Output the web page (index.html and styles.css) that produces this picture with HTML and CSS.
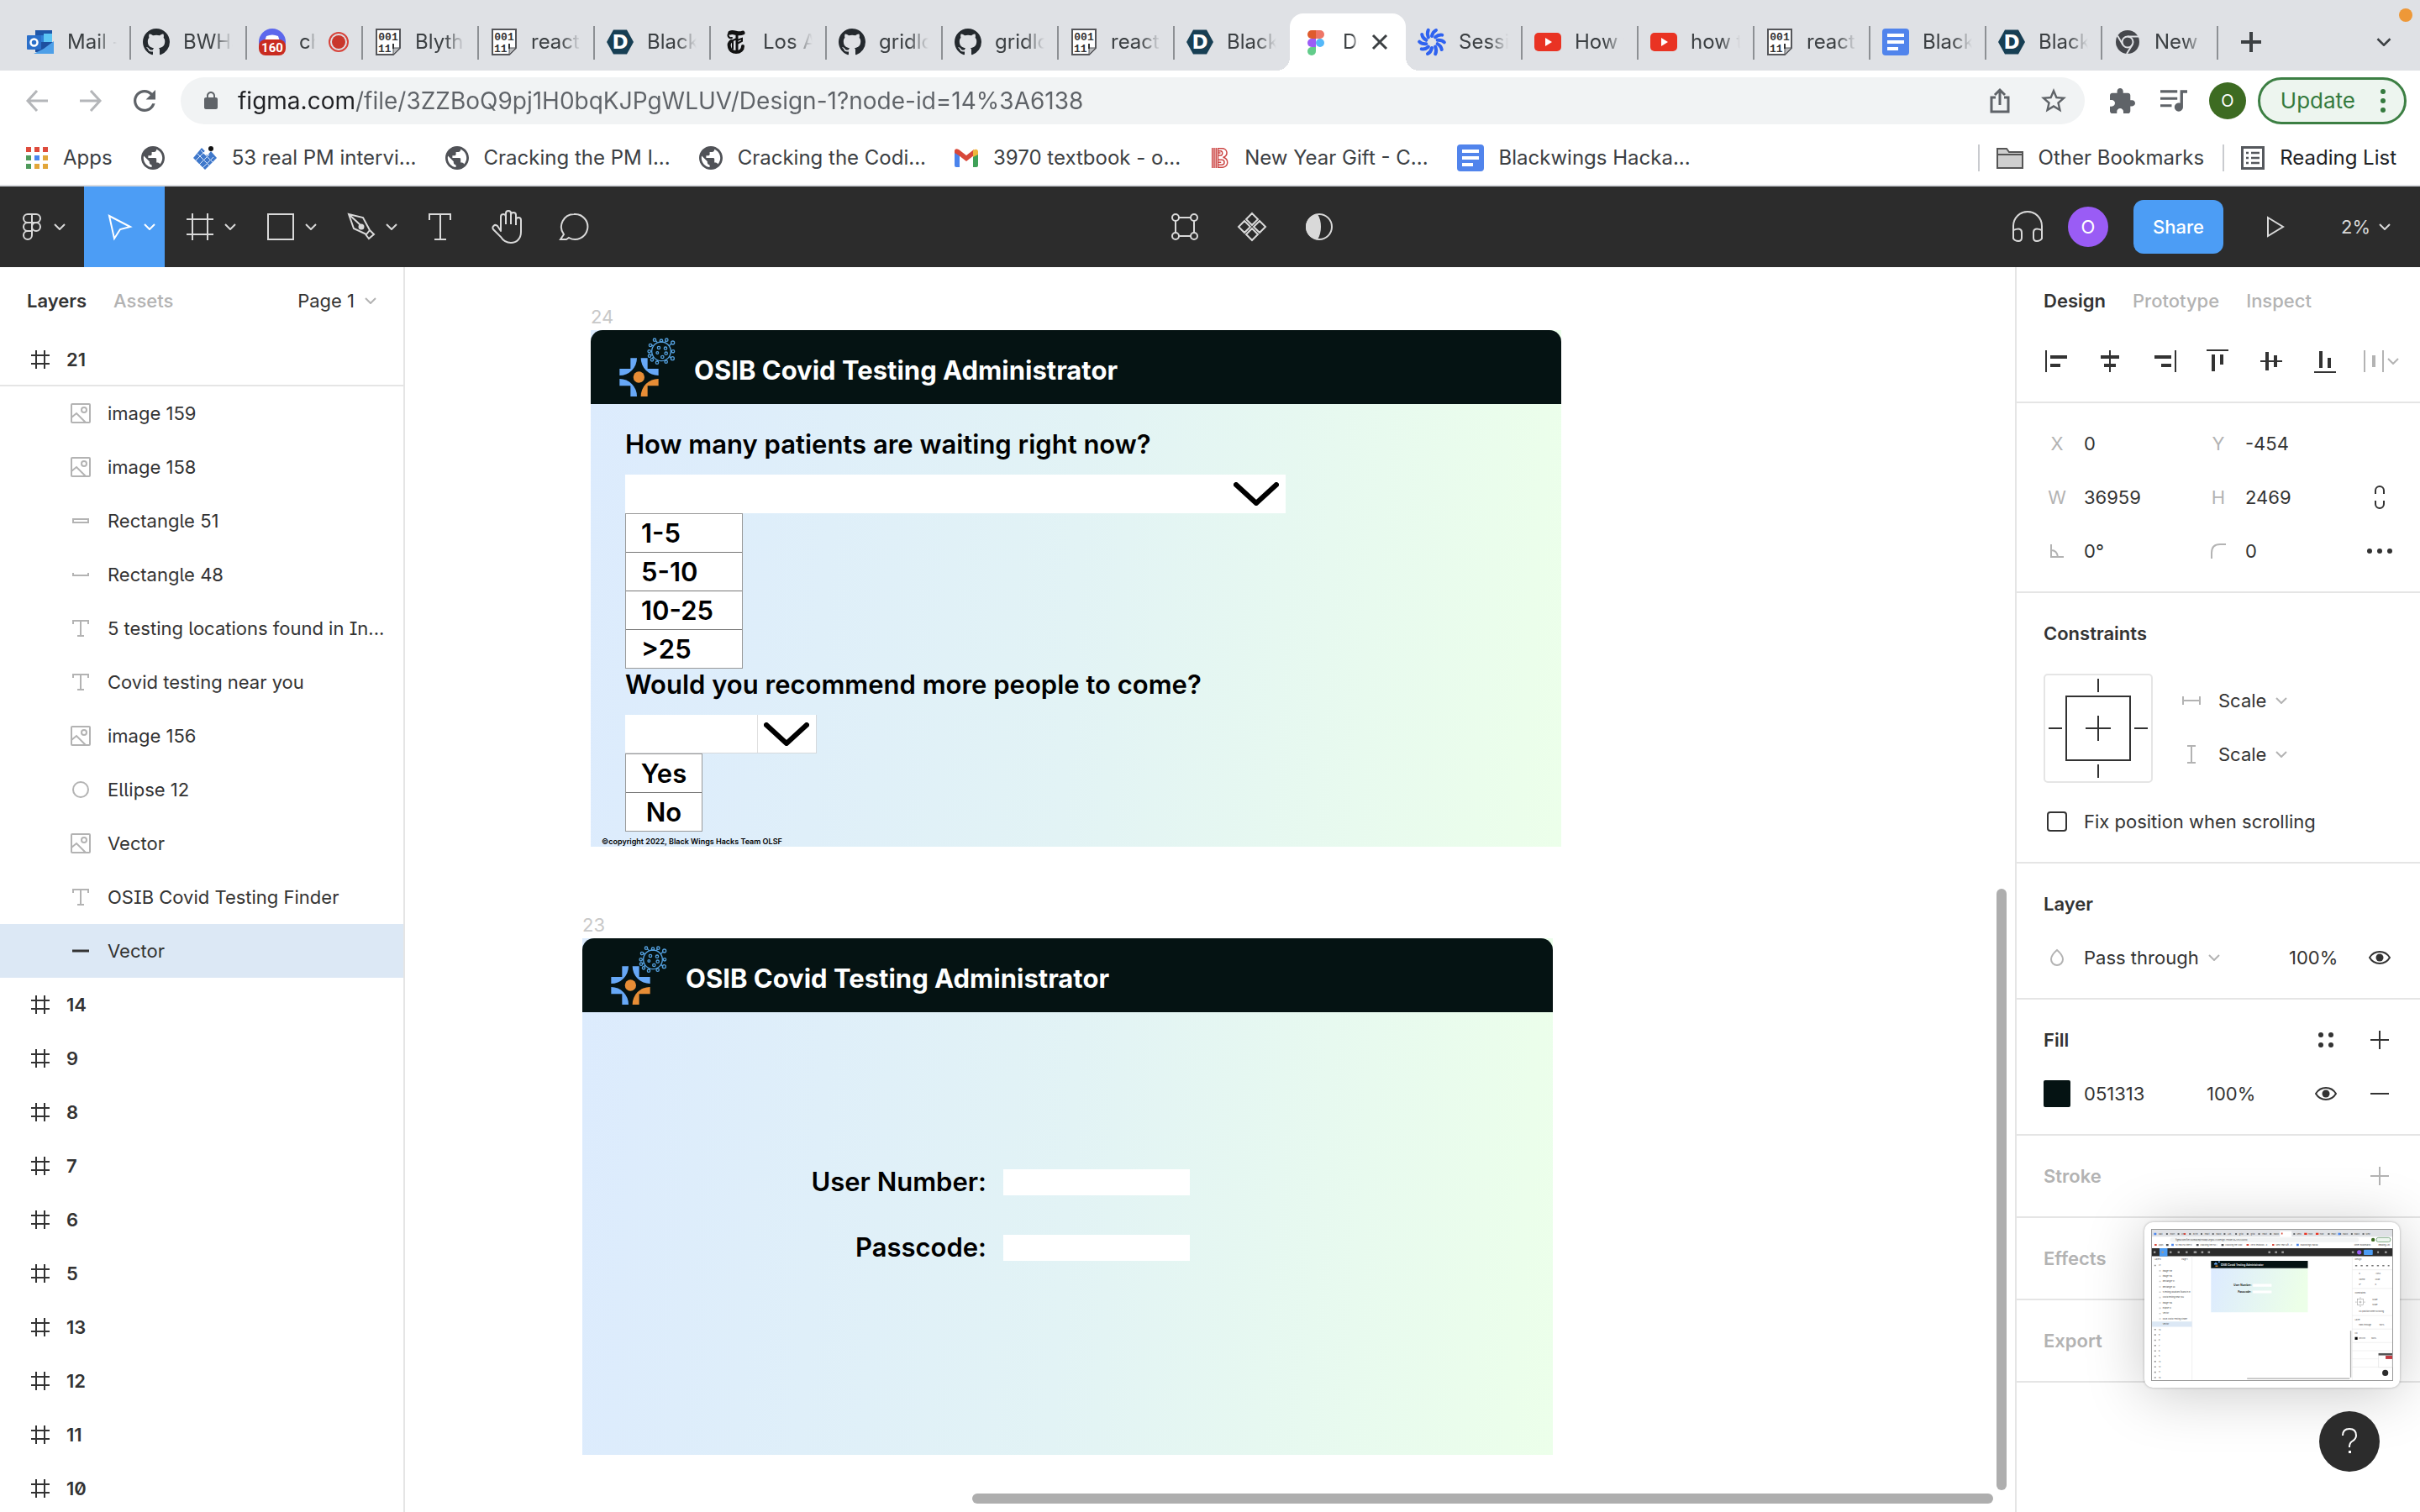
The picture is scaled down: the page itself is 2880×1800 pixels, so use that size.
FILE: index.html
```html
<!DOCTYPE html>
<html lang="en">
<head>
<meta charset="utf-8">
<title>Design 1 – Figma</title>
<link rel="stylesheet" href="styles.css">
</head>
<body>
<svg class="sprite" aria-hidden="true">
  <symbol id="github" viewBox="0 0 16 16"><path fill="#24292e" d="M8 0C3.58 0 0 3.58 0 8c0 3.54 2.29 6.53 5.47 7.59.4.07.55-.17.55-.38 0-.19-.01-.82-.01-1.49-2.01.37-2.53-.49-2.69-.94-.09-.23-.48-.94-.82-1.13-.28-.15-.68-.52-.01-.53.63-.01 1.08.58 1.23.82.72 1.21 1.87.87 2.33.66.07-.52.28-.87.51-1.07-1.78-.2-3.64-.89-3.64-3.95 0-.87.31-1.59.82-2.15-.08-.2-.36-1.02.08-2.12 0 0 .67-.21 2.2.82a7.6 7.6 0 0 1 4 0c1.53-1.04 2.2-.82 2.2-.82.44 1.1.16 1.92.08 2.12.51.56.82 1.27.82 2.15 0 3.07-1.87 3.75-3.65 3.95.29.25.54.73.54 1.48 0 1.07-.01 1.93-.01 2.2 0 .21.15.46.55.38A8 8 0 0 0 16 8c0-4.42-3.58-8-8-8z"/></symbol>
  <symbol id="binary" viewBox="0 0 32 32"><path fill="#fff" stroke="#55565a" stroke-width="2" d="M2 1h28v22l-8 8H2z"/><path fill="#b9babd" stroke="#55565a" stroke-width="1" d="M30 23h-8v8z"/><text x="16" y="14" text-anchor="middle" class="bits">001</text><text x="4" y="28" class="bits">11</text><path stroke="#333" stroke-width="2" d="M22 18v6"/></symbol>
  <symbol id="devpost" viewBox="0 0 32 32"><path fill="#173f54" d="M8 1.500h16l8 14.500-8 14.500H8L0 16z"/><text x="16" y="24" text-anchor="middle" class="logo-d">D</text></symbol>
  <symbol id="youtube" viewBox="0 0 32 32"><rect y="5" width="32" height="22" rx="5" fill="#e93323"/><path fill="#fff" d="M13 11l8 5-8 5z"/></symbol>
  <symbol id="docs" viewBox="0 0 32 32"><rect width="32" height="32" rx="4" fill="#5184ec"/><path stroke="#fff" stroke-width="4" d="M6 8h20M6 16h20M6 24h13"/></symbol>
  <symbol id="globe" viewBox="2 2 20 20"><path fill="#505257" d="M12 2C6.480 2 2 6.480 2 12s4.480 10 10 10 10-4.480 10-10S17.520 2 12 2zm-1 17.930c-3.950-.49-7-3.850-7-7.930 0-.62.08-1.210.21-1.790L9 15v1c0 1.100.9 2 2 2v1.930zm6.900-2.540c-.26-.81-1-1.390-1.900-1.390h-1v-3c0-.55-.45-1-1-1H8v-2h2c.55 0 1-.45 1-1V7h2c1.100 0 2-.9 2-2v-.41c2.930 1.190 5 4.060 5 7.410 0 2.080-.8 3.970-2.100 5.390z"/></symbol>
  <symbol id="chev" viewBox="0 0 14 8"><path fill="none" stroke="currentColor" stroke-width="2" d="M1 1l6 6 6-6"/></symbol>
  <symbol id="bigchev" viewBox="0 0 54 28"><path fill="none" stroke="#000" stroke-width="6" stroke-linecap="round" stroke-linejoin="round" d="M3 3l24 22L51 3"/></symbol>
  <symbol id="frame" viewBox="0 0 22 22"><path stroke="#333" stroke-width="2" d="M6 0v22M16 0v22M0 6h22M0 16h22"/></symbol>
  <symbol id="image" viewBox="0 0 24 24"><g fill="none" stroke="#b3b3b3" stroke-width="2"><rect x="1" y="1" width="22" height="22" rx="1"/><circle cx="16" cy="8" r="3"/><path d="M1 17l6-5 11 11"/></g></symbol>
  <symbol id="text" viewBox="0 0 24 24"><path fill="none" stroke="#b3b3b3" stroke-width="2" d="M3 7V3h18v4M12 3v18M8 21h8"/></symbol>
  <symbol id="eye" viewBox="0 0 26 18"><path fill="none" stroke="#333" stroke-width="2" d="M1 9C4 4 8 2 13 2s9 2 12 7c-3 5-7 7-12 7S4 14 1 9z"/><circle cx="13" cy="9" r="4.500" fill="#333"/></symbol>
  <symbol id="plus" viewBox="0 0 22 22"><path stroke="currentColor" stroke-width="2" d="M11 0v22M0 11h22"/></symbol>
  <symbol id="logo" viewBox="0 0 270 252">
    <g fill="#67a8f7"><path d="M67 94H90A62 62 0 0 1 28 156V132H67z"/><path d="M128 94H104A62 62 0 0 0 167 156V132H128z"/><path d="M28 168V193H67V231H90A62 62 0 0 0 28 168z"/></g>
    <g fill="#e78d36"><path d="M167 168V193H128V231H104A62 62 0 0 1 167 168z"/><circle cx="97" cy="162" r="20"/></g>
    <g fill="none" stroke="#549fdd" stroke-width="4"><circle cx="177" cy="70" r="34"/>
    <path d="M177 36v-3M190 38l4-6M163 38l-6-7M205 50l8-8M149 50l-6-2M211 70h4M143 70h-4M149 90l-5 6M144 82l-6 3M165 102l-2 4M190 102l3 3M205 88l9 6"/>
    <circle cx="177" cy="32" r="5"/><circle cx="196" cy="29" r="5"/><circle cx="153" cy="29" r="5"/><circle cx="218" cy="39" r="6"/><circle cx="138" cy="48" r="5"/><circle cx="219" cy="70" r="5"/><circle cx="134" cy="70" r="5"/><circle cx="135" cy="86" r="5"/><circle cx="144" cy="100" r="5"/><circle cx="162" cy="110" r="5"/><circle cx="194" cy="107" r="5"/><circle cx="217" cy="95" r="6"/>
    <circle cx="168" cy="57" r="5"/><circle cx="192" cy="59" r="5"/><circle cx="163" cy="75" r="4"/><circle cx="194" cy="77" r="5"/><circle cx="181" cy="90" r="5"/></g>
  </symbol>
</svg>

<header class="browser">
  <div class="tabstrip">
    <div class="tabs" role="tablist">
      <button class="tab" role="tab"><svg class="i32" viewBox="0 0 32 32"><path fill="#1f56a8" d="M10 2h20v6H10z"/><path fill="#2f7fd6" d="M10 8h10v8H10z"/><path fill="#5cc5f5" d="M20 6h10v12H20z"/><path fill="#1d4f9f" d="M10 16h22L22 28H10z"/><path fill="#4d9fe8" d="M8 30h24V15L20 24z"/><rect y="8" width="17" height="17" rx="1" fill="#2b6fc9"/><circle cx="8.500" cy="16.500" r="4" fill="none" stroke="#fff" stroke-width="2.500"/></svg><span class="tab-name">Mail -</span></button>
      <button class="tab" role="tab"><svg class="i32"><use href="#github"/></svg><span class="tab-name">BWHa</span></button>
      <button class="tab" role="tab"><svg class="i32" viewBox="0 0 32 32"><circle cx="16" cy="16" r="16" fill="#5c67ec"/><path fill="#fff" d="M9 9q7-3 14 0l2 6H7z"/><rect y="13" width="32" height="19" rx="8" fill="#c92b20"/><text x="16" y="28" text-anchor="middle" class="badge">160</text></svg><span class="tab-name">ch</span><svg class="i24" viewBox="0 0 24 24"><circle cx="12" cy="12" r="11" fill="none" stroke="#d8433a" stroke-width="2"/><circle cx="12" cy="12" r="8" fill="#c9372c"/></svg></button>
      <button class="tab" role="tab"><svg class="i32"><use href="#binary"/></svg><span class="tab-name">Blyth</span></button>
      <button class="tab" role="tab"><svg class="i32"><use href="#binary"/></svg><span class="tab-name">react</span></button>
      <button class="tab" role="tab"><svg class="i32"><use href="#devpost"/></svg><span class="tab-name">Black</span></button>
      <button class="tab" role="tab"><svg class="i32" viewBox="0 0 32 32"><g fill="none" stroke="#121212" stroke-linecap="round"><path stroke-width="5" d="M9 5c5-2 9 3 15 0"/><path stroke-width="2" d="M8 5c-3 3-1 7 3 6"/><path stroke-width="4" d="M10 15c-4 3-3 13 6 13 5 0 8-3 8-7"/><path stroke-width="3" d="M17 8v18"/><path stroke-width="2" d="M10 15l7-3M17 14l6-2v3l-6 3M12 14v10"/></g></svg><span class="tab-name">Los A</span></button>
      <button class="tab" role="tab"><svg class="i32"><use href="#github"/></svg><span class="tab-name">gridlo</span></button>
      <button class="tab" role="tab"><svg class="i32"><use href="#github"/></svg><span class="tab-name">gridlo</span></button>
      <button class="tab" role="tab"><svg class="i32"><use href="#binary"/></svg><span class="tab-name">react</span></button>
      <button class="tab no-line" role="tab"><svg class="i32"><use href="#devpost"/></svg><span class="tab-name">Black</span></button>
      <button class="tab no-line active" role="tab" aria-selected="true"><svg class="i32" viewBox="0 0 32 32"><path fill="#df5b2d" d="M16 2h-5a5 5 0 0 0 0 10h5z"/><path fill="#ee7667" d="M16 2h5a5 5 0 0 1 0 10h-5z"/><path fill="#9b5cf6" d="M16 12h-5a5 5 0 0 0 0 10h5z"/><circle cx="21" cy="17" r="5" fill="#54b8f9"/><path fill="#62cc8a" d="M11 22h5v5a5 5 0 1 1-5-5z"/></svg><span class="tab-name">De</span><svg class="i18" viewBox="0 0 18 18"><path stroke="#3c4043" stroke-width="3" d="M1 1l16 16M17 1L1 17"/></svg></button>
      <button class="tab" role="tab"><svg class="i32" viewBox="-16 -16 32 32"><g fill="none" stroke="#2f62f0" stroke-width="4" stroke-linecap="round"><path id="petal" d="M0-7q1-5 5-7"/><use href="#petal" transform="rotate(36)"/><use href="#petal" transform="rotate(72)"/><use href="#petal" transform="rotate(108)"/><use href="#petal" transform="rotate(144)"/><use href="#petal" transform="rotate(180)"/><use href="#petal" transform="rotate(216)"/><use href="#petal" transform="rotate(252)"/><use href="#petal" transform="rotate(288)"/><use href="#petal" transform="rotate(324)"/></g></svg><span class="tab-name">Sessi</span></button>
      <button class="tab" role="tab"><svg class="i32"><use href="#youtube"/></svg><span class="tab-name">How t</span></button>
      <button class="tab" role="tab"><svg class="i32"><use href="#youtube"/></svg><span class="tab-name">how t</span></button>
      <button class="tab" role="tab"><svg class="i32"><use href="#binary"/></svg><span class="tab-name">react</span></button>
      <button class="tab" role="tab"><svg class="i32"><use href="#docs"/></svg><span class="tab-name">Black</span></button>
      <button class="tab" role="tab"><svg class="i32"><use href="#devpost"/></svg><span class="tab-name">Black</span></button>
      <button class="tab" role="tab"><svg class="i32" viewBox="0 0 32 32"><circle cx="16" cy="16" r="14" fill="#45474c"/><circle cx="16" cy="16" r="6.500" fill="#45474c" stroke="#dfe1e5" stroke-width="2"/><path stroke="#dfe1e5" stroke-width="2" d="M16 9.500h13M10.400 19.200L4 8.500M21.600 19.200L15 30"/></svg><span class="tab-name">New</span></button>
    </div>
    <button class="new-tab" aria-label="New tab"><svg class="i24" viewBox="0 0 24 24"><path stroke="#3c4043" stroke-width="4" d="M12 0v24M0 12h24"/></svg></button>
    <button class="tab-search" aria-label="Search tabs"><svg class="chev18"><use href="#chev"/></svg></button>
    <span class="mic-dot"></span>
  </div>
  <div class="navbar">
    <button aria-label="Back"><svg class="i26" viewBox="0 0 26 26"><path fill="none" stroke="#b4b6b9" stroke-width="3" d="M26 13H2M13 1L2 13l11 12"/></svg></button>
    <button aria-label="Forward"><svg class="i26" viewBox="0 0 26 26"><path fill="none" stroke="#b4b6b9" stroke-width="3" d="M0 13h24M13 1l11 12-11 12"/></svg></button>
    <button aria-label="Reload"><svg class="i26" viewBox="4 4 16 16"><path fill="#5f6368" d="M17.650 6.350C16.200 4.900 14.210 4 12 4c-4.420 0-7.990 3.580-7.990 8s3.570 8 7.990 8c3.730 0 6.840-2.550 7.730-6h-2.080c-.82 2.330-3.040 4-5.650 4-3.310 0-6-2.690-6-6s2.690-6 6-6c1.660 0 3.140.69 4.220 1.780L13 11h7V4l-2.350 2.350z"/></svg></button>
    <div class="omnibox">
      <svg class="i24" viewBox="0 0 24 24"><path fill="#5f6368" d="M18 8h-1V6c0-2.760-2.240-5-5-5S7 3.240 7 6v2H6c-1.100 0-2 .9-2 2v10c0 1.100.9 2 2 2h12c1.100 0 2-.9 2-2V10c0-1.100-.9-2-2-2zM15.100 8H8.900V6c0-1.710 1.390-3.100 3.100-3.100s3.100 1.390 3.100 3.100v2z"/></svg>
      <input class="url" type="text" aria-label="Address" value="figma.com/file/3ZZBoQ9pj1H0bqKJPgWLUV/Design-1?node-id=14%3A6138">
      <button aria-label="Share page"><svg class="i30" viewBox="0 0 30 30"><path fill="none" stroke="#5f6368" stroke-width="3" d="M10 11H5v17h20V11h-5M15 20V3M9 8l6-6 6 6"/></svg></button>
      <button aria-label="Bookmark"><svg class="i30" viewBox="2 2 20 20"><path fill="#5f6368" d="M22 9.240l-7.190-.62L12 2 9.190 8.630 2 9.240l5.460 4.730L5.820 21 12 17.270 18.180 21l-1.630-7.030L22 9.240zM12 15.400l-3.760 2.270 1-4.280-3.320-2.880 4.380-.38L12 6.100l1.710 4.040 4.380.38-3.320 2.880 1 4.280L12 15.400z"/></svg></button>
    </div>
    <button class="ext" aria-label="Extensions"><svg class="i30" viewBox="2 1 21 21"><path fill="#5f6368" d="M20.500 11H19V7c0-1.100-.9-2-2-2h-4V3.500C13 2.120 11.880 1 10.500 1S8 2.120 8 3.500V5H4c-1.100 0-1.990.9-1.990 2v3.800H3.500c1.490 0 2.700 1.210 2.700 2.700s-1.210 2.700-2.700 2.700H2V20c0 1.100.9 2 2 2h3.800v-1.500c0-1.490 1.210-2.700 2.700-2.700 1.490 0 2.700 1.210 2.700 2.700V22H17c1.100 0 2-.9 2-2v-4h1.500c1.380 0 2.500-1.120 2.500-2.500S21.880 11 20.500 11z"/></svg></button>
    <button class="queue" aria-label="Media"><svg class="i32" viewBox="3 3 19 19"><path fill="#5f6368" d="M15 5H3v1.800h12V5zm0 5H3v1.800h12V10zM3 16.800h8V15H3v1.800zM17 5v9.180c-.31-.11-.65-.18-1-.18-1.660 0-3 1.340-3 3s1.340 3 3 3 3-1.340 3-3V7h3V5h-5z"/></svg></button>
    <button class="profile" aria-label="Profile">O</button>
    <button class="update">Update<svg class="dots3" viewBox="0 0 6 28"><circle cx="3" cy="3" r="3"/><circle cx="3" cy="14" r="3"/><circle cx="3" cy="25" r="3"/></svg></button>
  </div>
  <nav class="bookmarks">
    <a href="#"><svg class="i26" viewBox="0 0 26 26"><path fill="#de4b3c" d="M0 0h6v6H0zM10 0h6v6h-6zM20 0h6v6h-6z"/><path fill="#4f9a5b" d="M0 10h6v6H0zM0 20h6v6H0z"/><path fill="#4a86ee" d="M10 10h6v6h-6z"/><path fill="#e2a63a" d="M20 10h6v6h-6zM10 20h6v6h-6zM20 20h6v6h-6z"/></svg>Apps</a>
    <a href="#" aria-label="Site"><svg class="i28"><use href="#globe"/></svg></a>
    <a href="#"><svg class="i28" viewBox="0 0 28 28"><path fill="#3f78cb" d="M10 2l4 4-2 3 5 2 4-5 7 8-14 14L0 14z"/><path stroke="#dce8fa" stroke-width="1" d="M5 9l14 14M9 5l14 14M14 6L3 17M19 10L7 22M24 13L11 26"/><circle cx="21" cy="3" r="3" fill="#111"/></svg>53 real PM intervi...</a>
    <a href="#"><svg class="i28"><use href="#globe"/></svg>Cracking the PM I...</a>
    <a href="#"><svg class="i28"><use href="#globe"/></svg>Cracking the Codi...</a>
    <a href="#"><svg class="i28" viewBox="0 0 28 28"><path fill="#4a83ec" d="M0 6l6 4v15H2q-2 0-2-2z"/><path fill="#3fa158" d="M28 6l-6 4v15h4q2 0 2-2z"/><path fill="#d8483a" d="M0 5q1-3 5-1l9 7 9-7v7l-9 7-9-7-5-3z"/><path fill="#eeb63c" d="M22 5q5-3 6 1v4l-6 3z"/></svg>3970 textbook - o...</a>
    <a href="#"><svg class="i24" viewBox="0 0 24 32"><g fill="none" stroke="#cc4644" stroke-width="2"><path d="M1 0v32M4 0v32M7 0v32M10 1h6a7 7 0 0 1 2 14 8 8 0 0 1-2 16h-6zM10 5h5a4 4 0 0 1 0 7h-5M10 19h6a4 4 0 0 1 0 8h-6M10 8h4M10 23h5"/></g></svg>New Year Gift - C...</a>
    <a href="#"><svg class="i32"><use href="#docs"/></svg>Blackwings Hacka...</a>
    <span class="spacer"></span>
    <a href="#" class="ruled"><svg class="i32" viewBox="0 0 32 32"><path fill="#cfcfcf" stroke="#555" stroke-width="2" d="M1 5h11l3 4h16v19H1z"/><path stroke="#555" stroke-width="2" d="M1 12h30"/></svg>Other Bookmarks</a>
    <a href="#" class="ruled strong"><svg class="i28" viewBox="0 0 28 28"><rect x="1.500" y="1.500" width="25" height="25" fill="none" stroke="#55585d" stroke-width="3"/><path stroke="#55585d" stroke-width="2.500" d="M6 8h3M6 14h3M6 20h3M12 8h10M12 14h10M12 20h10"/></svg>Reading List</a>
  </nav>
</header>

<div class="toolbar">
  <div class="tools">
    <button class="tool menu" aria-label="Main menu"><svg class="i32" viewBox="0 0 32 32"><g fill="none" stroke="#d9d9d9" stroke-width="2"><path d="M16 1h-5a5 5 0 0 0 0 10h5zM16 1h5a5 5 0 0 1 0 10h-5zM16 11h-5a5 5 0 0 0 0 10h5zM11 21h5v5a5 5 0 1 1-5-5z"/><circle cx="21" cy="16" r="5"/></g></svg><svg class="chev14"><use href="#chev"/></svg></button>
    <button class="tool on" aria-label="Move"><svg class="i32" viewBox="0 0 32 32"><path fill="none" stroke="#fff" stroke-width="2" d="M4 3l25 13-12 3-7 11z"/></svg><svg class="chev14"><use href="#chev"/></svg></button>
    <button class="tool" aria-label="Frame"><svg class="i32" viewBox="0 0 32 32"><path stroke="#d9d9d9" stroke-width="2" d="M7 0v32M25 0v32M0 7h32M0 25h32"/></svg><svg class="chev14"><use href="#chev"/></svg></button>
    <button class="tool" aria-label="Rectangle"><svg class="i32" viewBox="0 0 32 32"><rect x="1" y="1" width="30" height="30" fill="none" stroke="#d9d9d9" stroke-width="2"/></svg><svg class="chev14"><use href="#chev"/></svg></button>
    <button class="tool" aria-label="Pen"><svg class="i32" viewBox="0 0 32 32"><g fill="none" stroke="#d9d9d9" stroke-width="2"><path d="M1 1l17 4 8 15-4 5-15-7zM26 20l5 5-6 5-4-5M1 1l14 13"/><circle cx="16" cy="16" r="2.500" fill="#d9d9d9"/></g></svg><svg class="chev14"><use href="#chev"/></svg></button>
    <button class="tool small" aria-label="Text"><svg class="i32" viewBox="0 0 32 32"><path fill="none" stroke="#d9d9d9" stroke-width="2" d="M3 8V1h25v7M16 1v30M9 31h14"/></svg></button>
    <button class="tool small" aria-label="Hand"><svg class="i40" viewBox="0 0 40 40"><path fill="none" stroke="#d9d9d9" stroke-width="2" stroke-linecap="round" d="M12 25V8a3 3 0 0 1 6 0v9V4a3 3 0 0 1 6 0v13V6a3 3 0 0 1 6 0v12-6a3 3 0 0 1 6 0v14c0 8-5 13-12 13-6 0-9-2-12-7L3 23c-2-3 2-7 5-4l4 6"/></svg></button>
    <button class="tool small" aria-label="Comment"><svg class="i34" viewBox="0 0 34 32"><path fill="none" stroke="#d9d9d9" stroke-width="2" d="M16 1a15 15 0 1 1-6 28l-3 2H0l4-6A15 15 0 0 1 16 1z"/></svg></button>
  </div>
  <div class="tools center">
    <button class="tool small" aria-label="Edit object"><svg class="i32" viewBox="0 0 32 32"><g fill="none" stroke="#d9d9d9" stroke-width="2"><circle cx="5" cy="5" r="4"/><circle cx="27" cy="5" r="4"/><circle cx="5" cy="27" r="4"/><circle cx="27" cy="27" r="4"/><path d="M9 5h14M9 27h14M5 9v14M27 9v14"/></g></svg></button>
    <button class="tool small" aria-label="Create component"><svg class="i36" viewBox="0 0 36 36"><path fill="none" stroke="#d9d9d9" stroke-width="2" d="M18 2l7 7-7 7-7-7zM18 20l7 7-7 7-7-7zM9 11l7 7-7 7-7-7zM27 11l7 7-7 7-7-7z"/></svg></button>
    <button class="tool small" aria-label="Mask"><svg class="i32" viewBox="0 0 32 32"><circle cx="16" cy="16" r="15" fill="none" stroke="#d9d9d9" stroke-width="2"/><path fill="#d9d9d9" d="M16 1a15 15 0 0 0-2 30q4-6 4-15T14 1z"/></svg></button>
  </div>
  <div class="tools end">
    <button aria-label="Audio"><svg class="i36" viewBox="0 0 36 36"><path fill="none" stroke="#d9d9d9" stroke-width="2" d="M1 32V17a17 17 0 0 1 34 0v15M1 22q10-4 10 3v6q0 4-4 4t-6-3zM35 22q-10-4-10 3v6q0 4 4 4t6-3z"/></svg></button>
    <button class="avatar" aria-label="Account">O</button>
    <button class="share">Share</button>
    <button class="play" aria-label="Present"><svg class="i24" viewBox="0 0 24 24"><path fill="none" stroke="#d9d9d9" stroke-width="2" d="M3 1l18 11L3 23z"/></svg></button>
    <button class="zoom">2%<svg class="chev14"><use href="#chev"/></svg></button>
  </div>
</div>

<main class="workspace">
  <aside class="left">
    <div class="panel-tabs"><button class="ptab current">Layers</button><button class="ptab">Assets</button><button class="page">Page 1<svg class="chev14"><use href="#chev"/></svg></button></div>
    <ul class="layers">
      <li class="root pinned"><svg class="i22"><use href="#frame"/></svg>21</li>
      <li><svg class="i24"><use href="#image"/></svg>image 159</li>
      <li><svg class="i24"><use href="#image"/></svg>image 158</li>
      <li><svg class="i24" viewBox="0 0 24 24"><path fill="none" stroke="#b3b3b3" stroke-width="2" d="M3 10h18v4H3z"/></svg>Rectangle 51</li>
      <li><svg class="i24" viewBox="0 0 24 24"><path fill="none" stroke="#b3b3b3" stroke-width="2" d="M3 10v3h18v-3"/></svg>Rectangle 48</li>
      <li><svg class="i24"><use href="#text"/></svg>5 testing locations found in In...</li>
      <li><svg class="i24"><use href="#text"/></svg>Covid testing near you</li>
      <li><svg class="i24"><use href="#image"/></svg>image 156</li>
      <li><svg class="i24" viewBox="0 0 24 24"><circle cx="12" cy="12" r="9" fill="none" stroke="#b3b3b3" stroke-width="2"/></svg>Ellipse 12</li>
      <li><svg class="i24"><use href="#image"/></svg>Vector</li>
      <li><svg class="i24"><use href="#text"/></svg>OSIB Covid Testing Finder</li>
      <li class="selected"><svg class="i24" viewBox="0 0 24 24"><path stroke="#333" stroke-width="3" d="M2 12h20"/></svg>Vector</li>
      <li class="root"><svg class="i22"><use href="#frame"/></svg>14</li>
      <li class="root"><svg class="i22"><use href="#frame"/></svg>9</li>
      <li class="root"><svg class="i22"><use href="#frame"/></svg>8</li>
      <li class="root"><svg class="i22"><use href="#frame"/></svg>7</li>
      <li class="root"><svg class="i22"><use href="#frame"/></svg>6</li>
      <li class="root"><svg class="i22"><use href="#frame"/></svg>5</li>
      <li class="root"><svg class="i22"><use href="#frame"/></svg>13</li>
      <li class="root"><svg class="i22"><use href="#frame"/></svg>12</li>
      <li class="root"><svg class="i22"><use href="#frame"/></svg>11</li>
      <li class="root"><svg class="i22"><use href="#frame"/></svg>10</li>
    </ul>
  </aside>

  <section class="canvas">
    <article class="artboard board-24">
      <h2 class="board-label">24</h2>
      <div class="board">
        <div class="board-head"><svg class="mark"><use href="#logo"/></svg><span>OSIB Covid Testing Administrator</span></div>
        <div class="questions">
          <label for="waiting">How many patients are waiting right now?</label>
          <div class="drop wide"><select id="waiting"><option></option></select><svg class="bigchev"><use href="#bigchev"/></svg></div>
          <ul class="options"><li>1-5</li><li>5-10</li><li>10-25</li><li>&gt;25</li></ul>
          <label for="recommend">Would you recommend more people to come?</label>
          <div class="drop short"><select id="recommend"><option></option></select><svg class="bigchev"><use href="#bigchev"/></svg></div>
          <ul class="options yesno"><li>Yes</li><li>No</li></ul>
        </div>
        <p class="copyright">©copyright 2022, Black Wings Hacks Team OLSF</p>
      </div>
    </article>
    <article class="artboard board-23">
      <h2 class="board-label">23</h2>
      <div class="board">
        <div class="board-head"><svg class="mark"><use href="#logo"/></svg><span>OSIB Covid Testing Administrator</span></div>
        <form class="login">
          <label for="user">User Number:</label><input id="user" type="text">
          <label for="pass">Passcode:</label><input id="pass" type="password">
        </form>
      </div>
    </article>
    <span class="scroll-v"></span>
    <span class="scroll-h"></span>
  </section>

  <aside class="right">
    <div class="panel-tabs"><button class="ptab current">Design</button><button class="ptab">Prototype</button><button class="ptab">Inspect</button></div>
    <div class="align">
      <button aria-label="Align left"><svg class="i28" viewBox="0 0 28 28"><path fill="#333" d="M1 1h2v26H1zM7 7h20v4H7zM7 17h12v4H7z"/></svg></button>
      <button aria-label="Align centers"><svg class="i28" viewBox="0 0 28 28"><path fill="#333" d="M13 1h2v26h-2zM3 7h22v4H3zM7 17h14v4H7z"/></svg></button>
      <button aria-label="Align right"><svg class="i28" viewBox="0 0 28 28"><path fill="#333" d="M27 1h2v26h-2zM3 7h20v4H3zM11 17h12v4H11z"/></svg></button>
      <button aria-label="Align top"><svg class="i28" viewBox="0 0 28 28"><path fill="#333" d="M1 0h26v2H1zM7 6h4v20H7zM17 6h4v12h-4z"/></svg></button>
      <button aria-label="Align middle"><svg class="i28" viewBox="0 0 28 28"><path fill="#333" d="M1 13h26v2H1zM7 3h4v22H7zM17 7h4v14h-4z"/></svg></button>
      <button aria-label="Align bottom"><svg class="i28" viewBox="0 0 28 28"><path fill="#333" d="M1 26h26v2H1zM7 2h4v20H7zM17 10h4v12h-4z"/></svg></button>
      <button class="distribute" aria-label="Distribute"><svg class="i28" viewBox="0 0 28 28"><path fill="#b3b3b3" d="M2 1h2v26H2zM12 7h4v14h-4zM24 1h2v26h-2z"/></svg><svg class="chev14"><use href="#chev"/></svg></button>
    </div>
    <div class="section fields">
      <label for="fx">X</label><input id="fx" value="0"><label for="fy">Y</label><input id="fy" value="-454"><span></span>
      <label for="fw">W</label><input id="fw" value="36959"><label for="fh">H</label><input id="fh" value="2469"><button aria-label="Constrain proportions"><svg class="i28" viewBox="0 0 28 28"><path fill="none" stroke="#333" stroke-width="2" d="M9 10V6a5 5 0 0 1 10 0v4M9 18v4a5 5 0 0 0 10 0v-4"/></svg></button>
      <label for="fr" aria-label="Rotation"><svg class="i18" viewBox="0 0 18 18"><path fill="none" stroke="#b3b3b3" stroke-width="2" d="M2 1v15h15M2 8q7 0 8 8"/></svg></label><input id="fr" value="0°"><label for="fc" aria-label="Corner radius"><svg class="i18" viewBox="0 0 18 18"><path fill="none" stroke="#b3b3b3" stroke-width="2" d="M1 18v-7Q1 1 11 1h7"/></svg></label><input id="fc" value="0"><button aria-label="More"><svg class="i32" viewBox="0 0 32 32"><g fill="#333"><circle cx="4" cy="16" r="3"/><circle cx="16" cy="16" r="3"/><circle cx="28" cy="16" r="3"/></g></svg></button>
    </div>
    <div class="section">
      <h3>Constraints</h3>
      <div class="constraints">
        <svg class="widget" viewBox="0 0 130 130"><rect x="1" y="1" width="128" height="128" rx="4" fill="none" stroke="#e5e5e5" stroke-width="2"/><rect x="27" y="27" width="76" height="76" fill="none" stroke="#333" stroke-width="2"/><path stroke="#333" stroke-width="2" d="M65 6v16M65 108v16M6 65h16M108 65h16M65 50v30M50 65h30"/></svg>
        <div class="scales">
          <div class="pick"><svg class="i24" viewBox="0 0 24 24"><path fill="none" stroke="#b3b3b3" stroke-width="2" d="M2 7v10M22 7v10M2 12h20"/></svg><select class="w-scale" aria-label="Horizontal constraint"><option>Scale</option></select><svg class="chev14"><use href="#chev"/></svg></div>
          <div class="pick"><svg class="i24" viewBox="0 0 24 24"><path fill="none" stroke="#b3b3b3" stroke-width="2" d="M7 2h10M7 22h10M12 2v20"/></svg><select class="w-scale" aria-label="Vertical constraint"><option>Scale</option></select><svg class="chev14"><use href="#chev"/></svg></div>
        </div>
      </div>
      <label class="check"><input type="checkbox">Fix position when scrolling</label>
    </div>
    <div class="section">
      <h3>Layer</h3>
      <div class="row"><span class="cell"><svg class="i20" viewBox="0 0 20 20"><path fill="none" stroke="#b3b3b3" stroke-width="2" d="M10 1Q3 7 3 12a7 7 0 0 0 14 0Q17 7 10 1z"/></svg></span><select class="w-pass" aria-label="Blend mode"><option>Pass through</option></select><svg class="chev14"><use href="#chev"/></svg><input class="opacity push" aria-label="Layer opacity" value="100%"><button class="cell" aria-label="Visible"><svg class="eye"><use href="#eye"/></svg></button></div>
    </div>
    <div class="section">
      <div class="row"><h3>Fill</h3><button class="cell push" aria-label="Styles"><svg class="i20" viewBox="0 0 20 20"><g fill="#333"><circle cx="4" cy="4" r="3"/><circle cx="16" cy="4" r="3"/><circle cx="4" cy="16" r="3"/><circle cx="16" cy="16" r="3"/></g></svg></button><button class="cell" aria-label="Add fill"><svg class="i22"><use href="#plus"/></svg></button></div>
      <div class="row"><span class="swatch"></span><input class="hex" aria-label="Fill colour" value="051313"><input class="opacity" aria-label="Fill opacity" value="100%"><button class="cell push" aria-label="Visible"><svg class="eye"><use href="#eye"/></svg></button><button class="cell" aria-label="Remove fill"><svg class="i22" viewBox="0 0 22 22"><path stroke="#333" stroke-width="2" d="M0 11h22"/></svg></button></div>
    </div>
    <div class="section muted"><div class="row"><h3>Stroke</h3><button class="cell push" aria-label="Add stroke"><svg class="i22"><use href="#plus"/></svg></button></div></div>
    <div class="section muted"><div class="row"><h3>Effects</h3></div></div>
    <div class="section muted"><div class="row"><h3>Export</h3></div></div>
    <button class="help" aria-label="Help"><svg class="i40" viewBox="0 0 40 40"><path fill="none" stroke="#fff" stroke-width="2" d="M12 13q0-8 8-8t8 8q0 4-5 7-3 2-3 7"/><rect x="19" y="31" width="3" height="3" fill="#fff"/></svg></button>
  </aside>
</main>

<div class="preview">
  <svg viewBox="0 0 2880 1800">
    <defs><linearGradient id="pg" x2="1" y2=".15"><stop stop-color="#dceaff"/><stop offset="1" stop-color="#ecffe8"/></linearGradient></defs>
    <path fill="#fff" d="M0 0h2880v1800H0z"/><path fill="#dfe1e5" d="M0 0h2880v84H0z"/><path fill="#fff" d="M1534 16h140v68h-140z"/>
    <rect x="216" y="92" width="2264" height="56" rx="28" fill="#f1f3f4"/><path fill="#2c2c2c" d="M0 222h2880v96H0z"/><path fill="#4c9df5" d="M90 222h96v96H90z"/>
    <g class="mini"><text x="80" y="58">Mail</text><text x="218" y="58">BWH</text><text x="356" y="58">ch</text><text x="494" y="58">Blyth</text><text x="632" y="58">react</text><text x="770" y="58">Black</text><text x="908" y="58">Los</text><text x="1046" y="58">gridl</text><text x="1184" y="58">gridl</text><text x="1322" y="58">react</text><text x="1460" y="58">Black</text><text x="1736" y="58">Sess</text><text x="1874" y="58">How</text><text x="2012" y="58">how</text><text x="2150" y="58">react</text><text x="2288" y="58">Black</text><text x="2426" y="58">Black</text><text x="2564" y="58">New</text>
    <text x="284" y="130">figma.com/file/3ZZBoQ9pj1H0bqKJPgWLUV/Design-1?node-id=14%3A6138</text><text x="77" y="196">Apps</text><text x="281" y="196">53 real PM intervi...</text><text x="578" y="196">Cracking the PM I...</text><text x="878" y="196">Cracking the Codi...</text><text x="1181" y="196">3970 textbook - o...</text><text x="1485" y="196">New Year Gift - C...</text><text x="1780" y="196">Blackwings Hacka...</text><text x="2424" y="196">Other Bookmarks</text><text x="2713" y="196">Reading List</text></g>
    <path fill="none" stroke="#3c4043" stroke-width="14" stroke-dasharray="20 118" d="M32 50h1500M1695 50h900"/><path stroke="#e93323" stroke-width="22" d="M1825 50h34M1963 50h34"/><path stroke="#505257" stroke-width="22" d="M170 182h28M532 182h28M832 182h28"/><path stroke="#4a86ee" stroke-width="26" d="M233 182h28M1732 182h28M24 50h28M2230 50h28"/><path stroke="#d8483a" stroke-width="20" d="M31 182h26M1133 182h28M1441 182h24M380 50h24M1550 46h16"/>
    <circle cx="2650" cy="120" r="22" fill="#3d6b22"/><rect x="2688" y="94" width="172" height="52" rx="26" fill="#edf5ef" stroke="#3c7f43" stroke-width="6"/>
    <path stroke="#999" stroke-width="24" stroke-dasharray="24 72" d="M20 270h500"/><path stroke="#999" stroke-width="26" stroke-dasharray="26 54" d="M510 270h190M1394 270h200M2395 270h30M2700 270h20M2790 270h50"/>
    <circle cx="2484" cy="270" r="26" fill="#9a5cf5"/><rect x="2538" y="238" width="108" height="64" rx="8" fill="#4c9df5"/>
    <path stroke="#e5e5e5" stroke-width="6" d="M480 318v1482M2400 318v1482M2400 480h480M2400 704h480M2400 1028h480M2400 1190h480M2400 1352h480M2400 1450h480M2400 1548h480M2400 1646h480"/>
    <path fill="#dce8f5" d="M0 1100h480v64H0z"/>
    <g class="mini"><text x="32" y="366">Layers</text><text x="356" y="366">Page 1</text><text x="80" y="436">21</text><text x="128" y="500">image 159</text><text x="128" y="564">image 158</text><text x="128" y="628">Rectangle 51</text><text x="128" y="692">Rectangle 48</text><text x="128" y="756">5 testing locations found in In...</text><text x="128" y="820">Covid testing near you</text><text x="128" y="884">image 156</text><text x="128" y="948">Ellipse 12</text><text x="128" y="1012">Vector</text><text x="128" y="1076">OSIB Covid Testing Finder</text><text x="128" y="1140">Vector</text><text x="80" y="1204">14</text><text x="80" y="1268">9</text><text x="80" y="1332">8</text><text x="80" y="1396">7</text><text x="80" y="1460">6</text><text x="80" y="1524">5</text><text x="80" y="1588">13</text><text x="80" y="1652">12</text><text x="80" y="1716">11</text><text x="80" y="1780">10</text>
    <text x="2432" y="366">Design</text><text x="2480" y="536">0</text><text x="2673" y="536">-1454</text><text x="2480" y="600">36959</text><text x="2673" y="600">2469</text><text x="2480" y="664">0°</text><text x="2673" y="664">0</text><text x="2432" y="762">Constraints</text><text x="2641" y="842">Scale</text><text x="2641" y="906">Scale</text><text x="2480" y="986">Fix position when scrolling</text><text x="2432" y="1084">Layer</text><text x="2480" y="1148">Pass through</text><text x="2723" y="1148">100%</text><text x="2432" y="1246">Fill</text><text x="2480" y="1310">051313</text><text x="2627" y="1310">100%</text></g>
    <path stroke="#999" stroke-width="20" stroke-dasharray="16 48" d="M38 420v20M38 1188v604"/><path stroke="#ccc" stroke-width="20" stroke-dasharray="16 48" d="M96 484v600"/><path stroke="#777" stroke-width="16" stroke-dasharray="24 41" d="M2436 430h410"/>
    <rect x="2462" y="832" width="70" height="70" fill="none" stroke="#888" stroke-width="5"/><path stroke="#777" stroke-width="5" d="M2497 808v16M2497 910v16M2438 867h16M2540 867h16M2497 852v30M2482 867h30"/><path d="M2432 1286h32v32h-32z"/>
    <path fill="url(#pg)" d="M708 460h1160v530H708z"/><path fill="#051313" d="M708 372h1160v88H708z"/><text x="826" y="428" class="mini-title">OSIB Covid Testing Administrator</text>
    <text x="980" y="676" class="mini-label">User Number:</text><text x="1030" y="756" class="mini-label">Passcode:</text><path fill="#fff" d="M1210 650h224v31h-224zM1210 729h224v31h-224z"/>
    <path stroke="#67a8f7" stroke-width="14" d="M745 410h40M765 390v20M795 385h18"/><path stroke="#e78d36" stroke-width="14" d="M760 435h30"/>
    <path stroke="#aeaeae" stroke-width="14" d="M2382 1210v560M1140 1784h1230"/>
    <path fill="#fff" stroke="#ddd" stroke-width="6" d="M2715 1480h165v170h-165z"/><path fill="#555" d="M2715 1480h165v26h-165z"/><path fill="#c33a42" d="M2800 1510h80v40h-80z"/><circle cx="2796" cy="1716" r="36" fill="#2c2c2c"/>
  </svg>
</div>
</body>
</html>
```
FILE: styles.css
```css
* { box-sizing: border-box; }
html, body { height: 100%; }
body {
  margin: 0;
  display: flex;
  flex-direction: column;
  overflow: hidden;
  background: #fff;
  color: #333;
  font: 22px/32px Inter, "Liberation Sans", sans-serif;
}
button, input, select { font: inherit; color: inherit; background: none; border: 0; padding: 0; margin: 0; outline: 0; }
button { display: flex; align-items: center; justify-content: center; }
select { appearance: none; }
input { min-width: 0; }
ul { list-style: none; margin: 0; padding: 0; }
h2, h3, p { margin: 0; }
a { color: inherit; text-decoration: none; }
svg { display: block; flex: none; overflow: visible; }
.sprite { display: none; }

.i18 { width: 18px; height: 18px; }
.i20 { width: 20px; height: 20px; }
.i22 { width: 22px; height: 22px; }
.i24 { width: 24px; height: 24px; }
.i26 { width: 26px; height: 26px; }
.i28 { width: 28px; height: 28px; }
.i30 { width: 30px; height: 30px; }
.i32 { width: 32px; height: 32px; }
.i34 { width: 34px; height: 32px; }
.i36 { width: 36px; height: 36px; }
.i40 { width: 40px; height: 40px; }
.eye { width: 26px; height: 18px; }
.chev14 { width: 14px; height: 8px; color: #b3b3b3; }
.chev18 { width: 18px; height: 10px; color: #3c4043; }
.bits { font: bold 13px "Liberation Mono", monospace; fill: #333; }
.logo-d { font: bold 23px "DejaVu Sans", sans-serif; fill: #fff; }
.badge { font: bold 15px Roboto, sans-serif; fill: #fff; }

/* Browser chrome */
.browser { flex: none; border-bottom: 2px solid #dadce0; color: #3c4043; font-size: 24px; }
.tabstrip { position: relative; display: flex; align-items: center; height: 84px; padding: 16px 34px 0 17px; background: #dfe1e5; }
.tabs { display: flex; flex: 0 1 2622px; min-width: 0; height: 68px; }
.tab { position: relative; flex: 0 1 138px; min-width: 0; justify-content: flex-start; gap: 16px; height: 68px; padding: 0 16px 0 15px; }
.tab::after { content: ""; position: absolute; right: -1px; top: 15px; width: 2px; height: 40px; background: #8d9094; }
.tab.no-line::after { display: none; }
.tab-name { flex: 1; min-width: 0; text-align: left; overflow: hidden; white-space: nowrap; mask-image: linear-gradient(90deg, #000 60%, transparent); }
.tab.active { background: #fff; border-radius: 16px 16px 0 0; padding-right: 22px; }
.tab.active::before { content: ""; position: absolute; left: -16px; right: -16px; bottom: 0; height: 16px; background: radial-gradient(circle at 0 0, transparent 16px, #fff 16px) left / 16px 16px no-repeat, radial-gradient(circle at 100% 0, transparent 16px, #fff 16px) right / 16px 16px no-repeat; }
.new-tab { margin-left: 28px; }
.tab-search { margin-left: auto; }
.mic-dot { position: absolute; right: 9px; top: 10px; width: 16px; height: 16px; border-radius: 50%; background: #ee9838; }

.navbar { display: flex; align-items: center; gap: 38px; height: 72px; padding: 0 16px 0 31px; }
.omnibox { flex: 1; min-width: 0; display: flex; align-items: center; gap: 34px; height: 56px; margin-left: -8px; padding: 0 22px 0 24px; border-radius: 28px; background: #f1f3f4; }
.url { flex: 1; height: 40px; margin-left: -14px; font-size: 28px; color: transparent; background: linear-gradient(90deg, #202124 140px, #5f6368 140px) text; }
.ext { margin-left: -8px; }
.queue { margin-left: -8px; }
.profile { width: 44px; height: 44px; margin-left: -12px; border-radius: 50%; background: #3d6b22; color: #fff; font-size: 20px; }
.update { gap: 30px; height: 56px; margin-left: -24px; padding: 0 22px 0 24px; border: 3px solid #3c7f43; border-radius: 28px; background: #edf5ef; color: #357a3e; font-size: 26px; }
.dots3 { width: 6px; height: 28px; fill: #357a3e; }

.bookmarks { display: flex; align-items: center; gap: 34px; height: 64px; padding: 0 28px 0 31px; white-space: nowrap; }
.bookmarks a { display: flex; align-items: center; gap: 18px; height: 32px; }
.spacer { flex: 1; }
.bookmarks .ruled { border-left: 2px solid #c9cbcf; padding-left: 20px; margin-right: -12px; }
.bookmarks .strong { color: #202124; margin-right: 0; }

/* Editor toolbar */
.toolbar { flex: none; display: flex; align-items: center; height: 96px; background: #2c2c2c; color: #fff; }
.tools { display: flex; align-items: center; flex: 1 1 0; }
.tools.center { flex: none; margin-left: 100px; }
.tools.end { justify-content: flex-end; }
.tool { width: 96px; height: 96px; gap: 13px; padding-left: 15px; }
.tool.menu { width: 100px; gap: 10px; padding-left: 0; }
.tool.small { width: 80px; padding-left: 0; }
.tool.on { background: #4c9df5; }
.toolbar .chev14 { color: #d9d9d9; }
.tool.on .chev14 { color: #fff; }
.avatar { width: 48px; height: 48px; margin-left: 30px; border-radius: 50%; background: #9a5cf5; }
.share { height: 64px; margin-left: 30px; padding: 0 23px; border-radius: 12px; background: #4c9df5; font-weight: 500; }
.play { margin-left: 50px; }
.zoom { gap: 10px; margin: 0 35px 0 66px; color: #d9d9d9; }

/* Panels */
.workspace { flex: 1; min-height: 0; display: flex; }
.left, .right { flex: none; width: 482px; overflow: hidden; background: #fff; }
.left { border-right: 2px solid #e5e5e5; }
.right { position: relative; border-left: 2px solid #e5e5e5; }
.panel-tabs { display: flex; align-items: center; gap: 32px; height: 80px; padding: 0 32px; }
.ptab { font-weight: 500; color: #b3b3b3; }
.ptab.current { font-weight: 600; color: #333; }
.page { gap: 12px; margin-left: auto; }
.layers { font-feature-settings: "ss02", "zero"; }
.layers li { display: flex; align-items: center; gap: 20px; height: 64px; padding-left: 84px; white-space: nowrap; }
.layers .root { padding-left: 37px; font-weight: 600; }
.layers .pinned { height: 62px; border-bottom: 2px solid #e5e5e5; }
.layers .selected { background: #dce8f5; }

.canvas { position: relative; flex: 1; min-width: 0; overflow: hidden; }
.artboard { position: absolute; width: 1155px; }
.board-24 { left: 221px; top: 43px; }
.board-23 { left: 211px; top: 767px; }
.board-label { font-size: 22px; font-weight: 400; color: #c8c8c8; }
.board { height: 615px; background: linear-gradient(94deg, #dcebfd, #e2f3f5 50%, #ecffea); color: #000; font: 600 31px/38px Inter, sans-serif; }
.board-head { display: flex; align-items: center; gap: 8px; height: 88px; padding-left: 25px; border-radius: 14px 14px 0 0; background: #051313; color: #fff; font-weight: 700; white-space: nowrap; }
.board-head span { padding-top: 8px; }
.mark { width: 90px; height: 84px; }
.questions { padding: 29px 0 0 41px; }
.questions label { display: block; }
.drop { position: relative; display: flex; margin-top: 17px; height: 46px; background: #fff; }
.drop select { width: 100%; height: 100%; }
.drop .bigchev { position: absolute; right: 8px; top: 9px; }
.bigchev { width: 54px; height: 28px; }
.wide { width: 786px; }
.short { width: 228px; border: solid #d5d9dc; border-width: 0 1px 1px 0; }
.short select { border-right: 1px solid #e0e0e0; width: 158px; }
.options { width: 140px; border: 1px solid #999; background: #fff; }
.options li { height: 46px; padding-left: 18px; line-height: 46px; border-top: 1px solid #777; }
.options li:first-child { height: 45px; border-top: 0; }
.options.yesno { width: 92px; }
.yesno li { padding: 0; text-align: center; }
.copyright { margin: 5px 0 0 13px; font-size: 9px; line-height: 14px; }
.login { display: grid; grid-template-columns: 212px 222px; grid-auto-rows: 40px; gap: 38px 20px; align-items: center; padding: 182px 0 0 269px; }
.login label { text-align: right; white-space: nowrap; }
.login input { height: 31px; background: #fff; }
.scroll-v, .scroll-h { position: absolute; border-radius: 6px; background: #aeaeae; }
.scroll-v { right: 10px; top: 740px; bottom: 26px; width: 12px; }
.scroll-h { left: 675px; right: 26px; bottom: 10px; height: 12px; }

.align { display: flex; align-items: center; gap: 36px; height: 82px; padding: 0 0 16px 33px; border-bottom: 2px solid #e5e5e5; }
.distribute { gap: 2px; margin-left: -6px; }
.section { padding: 16px 32px; border-bottom: 2px solid #e5e5e5; }
.section h3 { font-size: 22px; font-weight: 600; line-height: 64px; }
.fields { display: grid; grid-template-columns: 32px 1fr 32px 1fr 32px; grid-auto-rows: 64px; align-items: center; }
.fields label { display: flex; justify-content: center; color: #b3b3b3; }
.fields input { width: 100%; padding-left: 16px; }
.constraints { display: flex; gap: 34px; padding: 16px 0 14px; }
.widget { width: 130px; height: 130px; }
.pick { display: flex; align-items: center; height: 64px; }
.pick select { margin-left: 20px; }
.w-scale { width: 68px; }
.w-pass { width: 164px; padding-left: 16px; }
.check { display: flex; align-items: center; gap: 20px; height: 64px; padding-left: 4px; }
.check input { appearance: none; width: 24px; height: 24px; border: 2px solid #333; border-radius: 4px; }
.row { display: flex; align-items: center; height: 64px; }
.cell { width: 32px; height: 32px; display: flex; align-items: center; justify-content: center; }
.push { margin-left: auto; }
.cell + .cell { margin-left: 32px; }
.opacity { width: 60px; }
.opacity + .cell { margin-left: 32px; }
.opacity + .cell.push { margin-left: auto; }
.swatch { width: 32px; height: 32px; border-radius: 2px; background: #051313; }
.hex { width: 146px; margin-left: 16px; }
.muted { color: #b3b3b3; }
.help { position: absolute; right: 48px; bottom: 48px; width: 72px; height: 72px; border-radius: 50%; background: #2c2c2c; z-index: 3; }

/* Floating screenshot preview */
.preview { position: absolute; right: 24px; bottom: 148px; width: 304px; padding: 8px; border-radius: 10px; background: #fff; box-shadow: 0 0 3px rgba(0, 0, 0, .3), 0 6px 70px rgba(0, 0, 0, .22); }
.preview svg { width: 100%; border: 1px solid #999; }
.mini { font: 24px Inter, sans-serif; fill: #444; }
.mini-title { font: 600 32px Inter, sans-serif; fill: #fff; }
.mini-label { font: 600 32px Inter, sans-serif; }
```
